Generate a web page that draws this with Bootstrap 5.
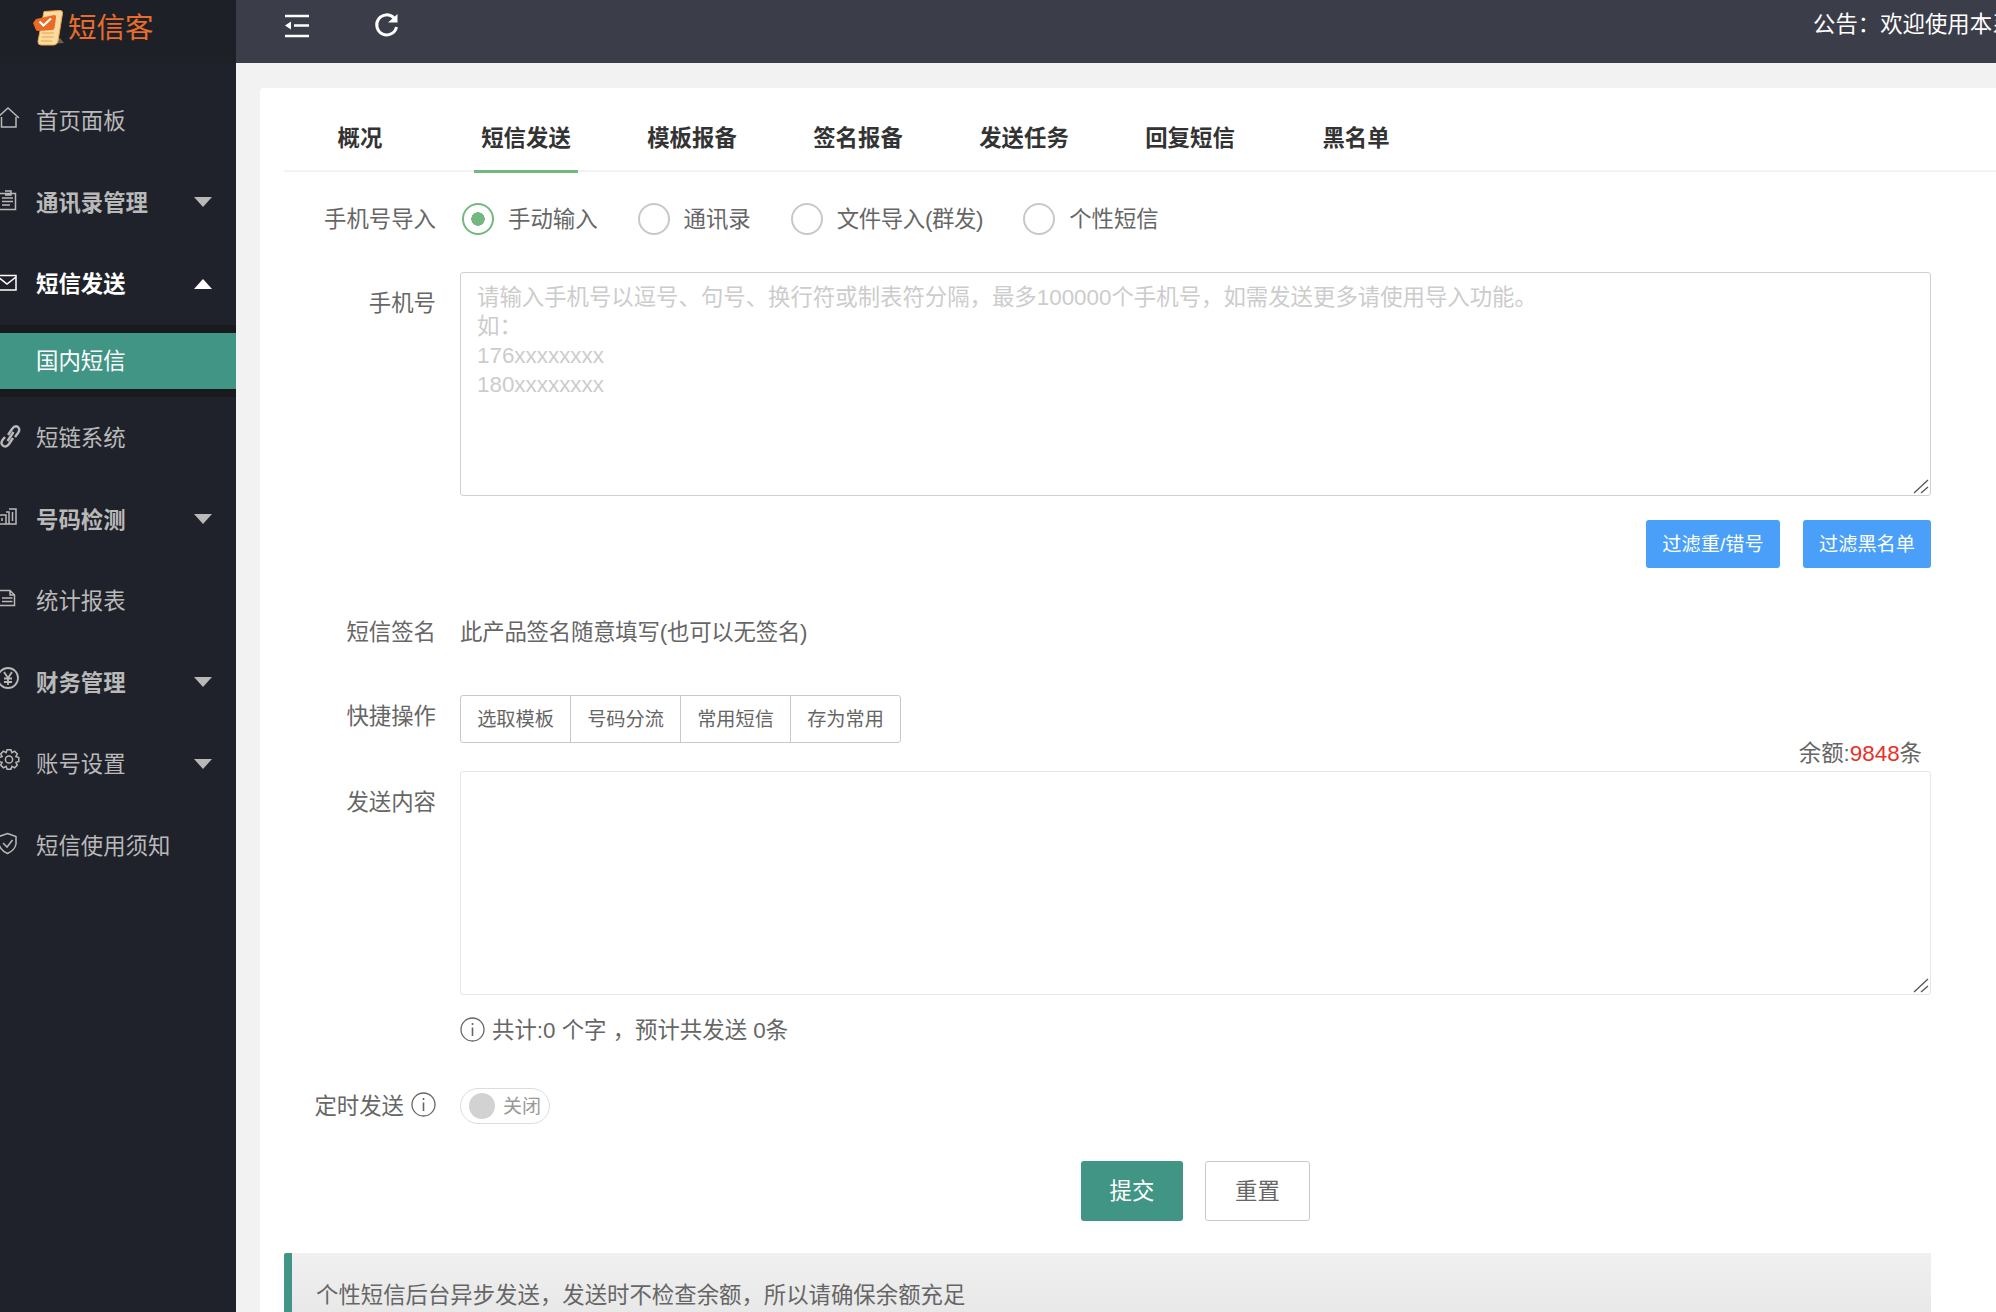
<!DOCTYPE html>
<html lang="zh-CN">
<head>
<meta charset="utf-8">
<title>短信客</title>
<link href="https://cdn.jsdelivr.net/npm/bootstrap@5.3.0/dist/css/bootstrap.min.css" rel="stylesheet">
<style>
html,body{height:100%;overflow:hidden}
body{font-family:"Liberation Sans","Noto Sans CJK SC",sans-serif;font-size:22.4px;color:#666;background:#f2f2f2;line-height:29px}
.shell{height:1312px;overflow:hidden}
.side{width:236px;flex:none;background:#1f222a;color:#b9b9b9}
.brand{height:63px;background:#1e2027;color:#e86c2b;font-size:28.5px;padding:0 0 7px 33px;gap:4px;line-height:1}
.side-menu{padding-top:17px}
.side-item{height:81.6px;padding:0 24px 0 0;gap:16px;color:#b9b9b9;font-size:22.4px}
.side-item.strong{font-weight:700}
.side-item.open{color:#fff}
.side-ico{width:20px;height:24px;flex:none;margin-top:-4px;fill:none;stroke:currentColor;stroke-width:1.5;overflow:visible}
.side-label{flex:1;padding-top:2px}
.tri{width:0;height:0;border-left:9px solid transparent;border-right:9px solid transparent;border-top:10px solid #b9b9b9}
.tri.up{border-top:0;border-bottom:10px solid #fff}
.sub-band{background:#181a20;padding:8px 0}
.sub-item{height:56px;background:#419585;color:#fff;padding:1px 0 0 36px}
.main-col{min-width:0}
.top-bar{height:63px;background:#3b3d49;color:#fff;padding:0 0 12px 48px;gap:65px}
.top-ico{width:25px;height:25px;fill:none;stroke:#fff;stroke-width:2.5;flex:none}
.notice-text{margin-left:auto;white-space:nowrap;width:183px;overflow:hidden;margin-top:-3px}
.sheet{margin:25px 0 0 24px;background:#fff;border-radius:4px 0 0 0;padding:0 65px 0 24px}
.tab-bar{height:84px;border-bottom:2px solid #f3f3f3;padding-left:24px;gap:62px;flex-wrap:nowrap;margin-right:-65px}
.tab-link{width:104px;padding:0;text-align:center;height:84px;line-height:102px;color:#333;font-weight:700;font-size:22.4px;white-space:nowrap;position:relative;margin-bottom:-2px}
.tab-link:hover{color:#333}
.tab-link.on{border-bottom:3px solid #72b880;height:85px}
.field-name{width:152px;margin-right:24px;flex:none;text-align:right;color:#666}
.radio-row{margin-top:31px;height:32px}
.pick{margin:0;gap:14px;padding:0}
.pick .form-check-input{width:32px;height:32px;margin:0;float:none;border:2px solid #c8c8c8;flex:none}
.pick .form-check-input:checked{background-color:#fff;border-color:#72b880;background-image:radial-gradient(circle,#72b880 0 6.5px,#fff 7px)}
.pick-wrap{gap:40px;margin-left:2px}
.tight-a{letter-spacing:-.35px}
.tight-b{letter-spacing:-.2px}
.area-wrap{position:relative;flex:1 1 auto;min-width:0}
.big-input{display:block;width:100%;resize:none;border:1px solid #d0d0d0;border-radius:3px;font-size:22.4px;line-height:29px;padding:10px 16px;color:#666}
.big-input::placeholder{color:#ccc}
.grip{position:absolute;right:2px;bottom:2px;width:16px;height:16px;fill:none;stroke:#555;stroke-width:1.3}
.phone-row{margin-top:37px}
.phone-area{height:224px}
.send-area{height:224px;border-color:#e6e6e6}
.pad-a{padding-top:17px}
.pad-b{padding-top:17px}
.blue-btn{background:#4a9ff9;border:0;color:#fff;height:48px;font-size:19.2px;padding:0;border-radius:3px;line-height:50px}
.blue-a{width:134px}
.blue-b{width:128px}
.filter-row{margin-top:24px;gap:23px}
.sign-row{margin-top:48px;height:32px}
.quick-row{margin-top:47px}
.quick-name{padding-bottom:5px}
.quick-group .btn{height:48px;width:111px;padding:0;font-size:19.2px;color:#666;background:#fff;border:1px solid #c9c9c9;line-height:48px;border-radius:3px}
.balance{height:28px;line-height:21px;text-align:right;padding-right:9px}
.balance em{font-style:normal;color:#e8302a}
.count-row{margin-top:24px;height:24px;padding-left:176px;gap:7px;line-height:26px}
.tip-ico{width:25px;height:25px;fill:none;stroke:#666;stroke-width:1.3;flex:none;margin-top:-3px}
.switch-row{margin-top:45px;height:36px}
.toggle-pill{width:90px;height:36px;border:1px solid #ddd;border-radius:18px;padding-left:8px;gap:8px;font-size:19px;color:#999}
.toggle-knob{width:26px;height:26px;border-radius:50%;background:#d2d2d2}
.sched-label{gap:7px}
.act-row{margin-top:37px;padding-left:176px;gap:22px}
.act-submit{background:#419585;border:0;color:#fff;width:102px;height:60px;font-size:22.4px;border-radius:3px;padding:2px 0 0}
.act-reset{background:#fff;border:1px solid #c9c9c9;color:#666;width:105px;height:60px;font-size:22.4px;border-radius:3px;padding:2px 0 0}
.tip-box{margin-top:32px;border-left:8px solid #419585;background:linear-gradient(#f0f0f0,#e3e3e3);height:100px;padding:28px 0 0 24px;border-radius:2px 0 0 0}
</style>
</head>
<body>
<div class="shell d-flex">
  <aside class="side">
    <div class="brand d-flex align-items-center">
      <svg width="31" height="36" viewBox="0 0 31 36"><path d="M14 34 L31 33 L27 28z" fill="#6b5f50"/><path d="M11 1.500 L27 0.500 Q30 0.500 29.500 3.500 L25 31 Q24.500 34.500 21 35 L8 35 Q4.500 35 5 31z" fill="#f9dca0" stroke="#f0a24a" stroke-width="1"/><path d="M9 23h12M8.500 27h12M8 31h11" stroke="#efb566" stroke-width="1.500"/><path d="M3 9 L21 5 Q23.500 5 23 7.500 L21.500 18 Q21 20 19 20 L5 21 Q2.500 21 2.500 19 L0 13z" fill="#ea6a24"/><path d="M6.500 11.500l4 4 7.500-7" fill="none" stroke="#fff" stroke-width="2.300"/></svg>
      <span>短信客</span>
    </div>
    <nav class="side-menu">
      <a class="side-item d-flex align-items-center text-decoration-none"><svg class="side-ico" viewBox="0 0 20 24"><path d="M-3 11L8 1L19 11M1.500 10V20H16V10"/></svg><span class="side-label">首页面板</span></a>
      <a class="side-item strong d-flex align-items-center text-decoration-none"><svg class="side-ico" viewBox="0 0 20 24"><path d="M-1 5.500H15.500V21.500H-1M5 3H11V7H5M2 10H13M2 13.500H13M2 17H10"/></svg><span class="side-label">通讯录管理</span><i class="tri"></i></a>
      <a class="side-item open strong d-flex align-items-center text-decoration-none"><svg class="side-ico" viewBox="0 0 20 24"><path d="M-2 5.500H16V20H-2M-2 7L7 14L16 7"/></svg><span class="side-label">短信发送</span><i class="tri up"></i></a>
      <div class="sub-band"><a class="sub-item d-flex align-items-center text-decoration-none">国内短信</a></div>
      <a class="side-item d-flex align-items-center text-decoration-none"><svg class="side-ico" viewBox="0 0 20 24"><path d="M5 13L2.500 16Q0 20 3.500 22Q6.500 23.500 9 20L13 14M8 11L12 5Q15 1 18 3Q20.500 5.500 18 9L15 13M7.500 17L13.500 8" stroke-width="2.400"/></svg><span class="side-label">短链系统</span></a>
      <a class="side-item strong d-flex align-items-center text-decoration-none"><svg class="side-ico" viewBox="0 0 20 24"><path d="M-2 10H6V19H-2M6 7H9V19M9 4H16V19H6M12.500 7V16M2 13V16"/></svg><span class="side-label">号码检测</span><i class="tri"></i></a>
      <a class="side-item d-flex align-items-center text-decoration-none"><svg class="side-ico" viewBox="0 0 20 24"><path d="M0 3.500H10L14.500 8V18.500H0M10 3.500V8H14.500M2 11H12.500M2 14.500H12.500"/></svg><span class="side-label">统计报表</span></a>
      <a class="side-item strong d-flex align-items-center text-decoration-none"><svg class="side-ico" viewBox="0 0 20 24"><circle cx="8" cy="10" r="10" stroke-width="1.800"/><path d="M4 4L8 10L12 4M8 10V17M4 10.500H12M4 14H12" stroke-width="1.800"/></svg><span class="side-label">财务管理</span><i class="tri"></i></a>
      <a class="side-item d-flex align-items-center text-decoration-none"><svg class="side-ico" viewBox="0 0 20 24"><circle cx="9" cy="9.500" r="3.600"/><polygon transform="translate(9 9.500)" points="9.800,-1.900 9.800,1.900 6.900,2.900 8.300,5.600 5.600,8.300 2.900,6.900 1.900,9.800 -1.900,9.800 -2.900,6.900 -5.600,8.300 -8.300,5.600 -6.900,2.900 -9.800,1.900 -9.800,-1.900 -6.900,-2.900 -8.300,-5.600 -5.600,-8.300 -2.900,-6.900 -1.900,-9.800 1.900,-9.800 2.900,-6.900 5.600,-8.300 8.300,-5.600 6.900,-2.900"/></svg><span class="side-label">账号设置</span><i class="tri"></i></a>
      <a class="side-item d-flex align-items-center text-decoration-none"><svg class="side-ico" viewBox="0 0 20 24"><path d="M7.500 1.500L16 4.500V12Q15 18 7.500 21.500Q0 18 -1 12V4.500ZM3 11L7 15L12.500 8"/></svg><span class="side-label">短信使用须知</span></a>
    </nav>
  </aside>
  <div class="main-col flex-grow-1">
    <header class="top-bar d-flex align-items-center">
      <svg class="top-ico" viewBox="0 0 25 25"><path d="M1 3H25M10 12.500H25M1 23H25"/><path d="M7 8.500V16.500L1 12.500Z" fill="#fff" stroke="none"/></svg>
      <svg class="top-ico" viewBox="0 0 25 25"><path d="M20 5A10 10 0 1 0 22.500 14" stroke-width="3"/><path d="M14 9.500H23.500V1Z" fill="#fff" stroke="none"/></svg>
      <div class="notice-text">公告：欢迎使用本系统短信平台</div>
    </header>
    <main class="sheet">
      <ul class="nav tab-bar">
        <li class="nav-item"><a class="nav-link tab-link" href="#">概况</a></li>
        <li class="nav-item"><a class="nav-link tab-link on" href="#">短信发送</a></li>
        <li class="nav-item"><a class="nav-link tab-link" href="#">模板报备</a></li>
        <li class="nav-item"><a class="nav-link tab-link" href="#">签名报备</a></li>
        <li class="nav-item"><a class="nav-link tab-link" href="#">发送任务</a></li>
        <li class="nav-item"><a class="nav-link tab-link" href="#">回复短信</a></li>
        <li class="nav-item"><a class="nav-link tab-link" href="#">黑名单</a></li>
      </ul>
      <div class="radio-row d-flex align-items-center">
        <div class="field-name">手机号导入</div>
        <div class="pick-wrap d-flex">
          <label class="pick form-check d-flex align-items-center"><input class="form-check-input" type="radio" name="src" checked>手动输入</label>
          <label class="pick form-check d-flex align-items-center"><input class="form-check-input" type="radio" name="src">通讯录</label>
          <label class="pick tight-a form-check d-flex align-items-center"><input class="form-check-input" type="radio" name="src">文件导入(群发)</label>
          <label class="pick form-check d-flex align-items-center"><input class="form-check-input" type="radio" name="src">个性短信</label>
        </div>
      </div>
      <div class="phone-row d-flex">
        <div class="field-name pad-a">手机号</div>
        <div class="area-wrap">
          <textarea class="form-control big-input phone-area" placeholder="请输入手机号以逗号、句号、换行符或制表符分隔，最多100000个手机号，如需发送更多请使用导入功能。&#10;如：&#10;176xxxxxxxx&#10;180xxxxxxxx"></textarea>
          <svg class="grip" viewBox="0 0 16 16"><path d="M15 2L1 15M15 9L8 15"/></svg>
        </div>
      </div>
      <div class="filter-row d-flex justify-content-end">
        <button class="btn blue-btn blue-a" type="button">过滤重/错号</button>
        <button class="btn blue-btn blue-b" type="button">过滤黑名单</button>
      </div>
      <div class="sign-row d-flex align-items-center">
        <div class="field-name">短信签名</div>
        <div class="tight-b">此产品签名随意填写(也可以无签名)</div>
      </div>
      <div class="quick-row d-flex align-items-center">
        <div class="field-name quick-name">快捷操作</div>
        <div class="btn-group quick-group" role="group">
          <button class="btn" type="button">选取模板</button>
          <button class="btn" type="button">号码分流</button>
          <button class="btn" type="button">常用短信</button>
          <button class="btn" type="button">存为常用</button>
        </div>
      </div>
      <div class="balance">余额:<em>9848</em>条</div>
      <div class="d-flex">
        <div class="field-name pad-b">发送内容</div>
        <div class="area-wrap">
          <textarea class="form-control big-input send-area"></textarea>
          <svg class="grip" viewBox="0 0 16 16"><path d="M15 2L1 15M15 9L8 15"/></svg>
        </div>
      </div>
      <div class="count-row d-flex align-items-center">
        <svg class="tip-ico" viewBox="0 0 25 25"><circle cx="12.500" cy="12.500" r="11.500"/><path d="M12.500 10.500V19M12.500 6V8" stroke-width="1.600"/></svg>
        <span>共计:0 个字 ，预计共发送 0条</span>
      </div>
      <div class="switch-row d-flex align-items-center">
        <div class="field-name sched-label d-flex align-items-center justify-content-end">定时发送<svg class="tip-ico" viewBox="0 0 25 25"><circle cx="12.500" cy="12.500" r="11.500"/><path d="M12.500 10.500V19M12.500 6V8" stroke-width="1.600"/></svg></div>
        <div class="toggle-pill d-flex align-items-center"><span class="toggle-knob"></span><span>关闭</span></div>
      </div>
      <div class="act-row d-flex justify-content-center">
        <button class="btn act-submit" type="button">提交</button>
        <button class="btn act-reset" type="button">重置</button>
      </div>
      <div class="tip-box">个性短信后台异步发送，发送时不检查余额，所以请确保余额充足</div>
    </main>
  </div>
</div>
</body>
</html>
